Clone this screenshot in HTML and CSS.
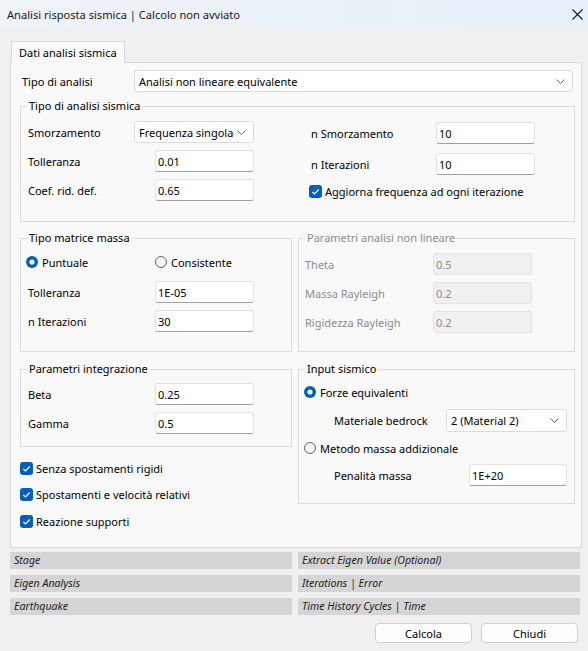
FILE: index.html
```html
<!DOCTYPE html>
<html>
  <head>
    <meta charset="utf-8" />
    <title>Analisi risposta sismica</title>
    <link rel="stylesheet" href="styles.css">
  </head>
  <body>
    <div class="titlebar">
      <span class="title">Analisi risposta sismica | Calcolo non avviato</span>
      <svg class="close" width="11" height="11" viewBox="0 0 11 11"><path d="M0.5 0.5L10.5 10.5M10.5 0.5L0.5 10.5" stroke="#1a1a1a" stroke-width="1.1" fill="none"/></svg>
    </div>

    <div class="dialog">
      <div class="tabs">
        <div class="tab">Dati analisi sismica</div>
      </div>

      <div class="panel">
        <div class="analysis-row">
          <label class="analysis-label">Tipo di analisi</label>
          <div class="select select-wide">
            <span>Analisi non lineare equivalente</span>
            <svg width="9" height="5" viewBox="0 0 9 5"><path d="M0.5 0.5L4.5 4.5L8.5 0.5" stroke="#606060" fill="none"/></svg>
          </div>
        </div>

        <fieldset class="group group-top">
          <legend>Tipo di analisi sismica</legend>
          <div class="group-body body-seismic">
            <div class="col">
              <div class="row">
                <label>Smorzamento</label>
                <div class="select select-damping">
                  <span>Frequenza singola</span>
                  <svg width="9" height="5" viewBox="0 0 9 5"><path d="M0.5 0.5L4.5 4.5L8.5 0.5" stroke="#606060" fill="none"/></svg>
                </div>
              </div>
              <div class="row">
                <label>Tolleranza</label>
                <input class="field" type="text" value="0.01">
              </div>
              <div class="row">
                <label>Coef. rid. def.</label>
                <input class="field" type="text" value="0.65">
              </div>
            </div>
            <div class="col col-right">
              <div class="row">
                <label>n Smorzamento</label>
                <input class="field" type="text" value="10">
              </div>
              <div class="row row-loose">
                <label>n Iterazioni</label>
                <input class="field" type="text" value="10">
              </div>
              <div class="check check-update">
                <svg width="13" height="13" viewBox="0 0 13 13"><rect width="13" height="13" rx="3" fill="#005fb8"/><path d="M3.3 6.8L5.5 9L9.8 4.5" stroke="#fff" stroke-width="1.2" fill="none"/></svg>
                <span>Aggiorna frequenza ad ogni iterazione</span>
              </div>
            </div>
          </div>
        </fieldset>

        <div class="pair">
          <fieldset class="group">
            <legend>Tipo matrice massa</legend>
            <div class="group-body body-mass">
              <div class="radio-row">
                <div class="radio radio-first">
                  <svg width="12" height="12" viewBox="0 0 12 12"><circle cx="6" cy="6" r="6" fill="#005fb8"/><circle cx="6" cy="6" r="2.6" fill="#fff"/></svg>
                  <span>Puntuale</span>
                </div>
                <div class="radio">
                  <svg width="12" height="12" viewBox="0 0 12 12"><circle cx="6" cy="6" r="5.5" fill="#f5f5f5" stroke="#646464"/></svg>
                  <span>Consistente</span>
                </div>
              </div>
              <div class="row row-inset row-spaced">
                <label>Tolleranza</label>
                <input class="field" type="text" value="1E-05">
              </div>
              <div class="row row-inset">
                <label>n Iterazioni</label>
                <input class="field" type="text" value="30">
              </div>
            </div>
          </fieldset>

          <fieldset class="group disabled">
            <legend>Parametri analisi non lineare</legend>
            <div class="group-body body-nonlinear">
              <div class="row">
                <label>Theta</label>
                <input class="field" type="text" value="0.5" disabled>
              </div>
              <div class="row">
                <label>Massa Rayleigh</label>
                <input class="field" type="text" value="0.2" disabled>
              </div>
              <div class="row">
                <label>Rigidezza Rayleigh</label>
                <input class="field" type="text" value="0.2" disabled>
              </div>
            </div>
          </fieldset>
        </div>

        <div class="pair pair-lower">
          <div class="stack">
            <fieldset class="group">
              <legend>Parametri integrazione</legend>
              <div class="group-body body-integration">
                <div class="row row-inset">
                  <label>Beta</label>
                  <input class="field" type="text" value="0.25">
                </div>
                <div class="row row-inset">
                  <label>Gamma</label>
                  <input class="field" type="text" value="0.5">
                </div>
              </div>
            </fieldset>

            <div class="checks">
              <div class="check">
                <svg width="13" height="13" viewBox="0 0 13 13"><rect width="13" height="13" rx="3" fill="#005fb8"/><path d="M3.3 6.8L5.5 9L9.8 4.5" stroke="#fff" stroke-width="1.2" fill="none"/></svg>
                <span>Senza spostamenti rigidi</span>
              </div>
              <div class="check">
                <svg width="13" height="13" viewBox="0 0 13 13"><rect width="13" height="13" rx="3" fill="#005fb8"/><path d="M3.3 6.8L5.5 9L9.8 4.5" stroke="#fff" stroke-width="1.2" fill="none"/></svg>
                <span>Spostamenti e velocità relativi</span>
              </div>
              <div class="check">
                <svg width="13" height="13" viewBox="0 0 13 13"><rect width="13" height="13" rx="3" fill="#005fb8"/><path d="M3.3 6.8L5.5 9L9.8 4.5" stroke="#fff" stroke-width="1.2" fill="none"/></svg>
                <span>Reazione supporti</span>
              </div>
            </div>
          </div>

          <fieldset class="group group-input">
            <legend>Input sismico</legend>
            <div class="group-body body-input">
              <div class="radio">
                <svg width="12" height="12" viewBox="0 0 12 12"><circle cx="6" cy="6" r="6" fill="#005fb8"/><circle cx="6" cy="6" r="2.6" fill="#fff"/></svg>
                <span>Forze equivalenti</span>
              </div>
              <div class="row row-sub row-bedrock">
                <label>Materiale bedrock</label>
                <div class="select select-bedrock">
                  <span>2 (Material 2)</span>
                  <svg width="9" height="5" viewBox="0 0 9 5"><path d="M0.5 0.5L4.5 4.5L8.5 0.5" stroke="#606060" fill="none"/></svg>
                </div>
              </div>
              <div class="radio radio-mass">
                <svg width="12" height="12" viewBox="0 0 12 12"><circle cx="6" cy="6" r="5.5" fill="#f5f5f5" stroke="#646464"/></svg>
                <span>Metodo massa addizionale</span>
              </div>
              <div class="row row-sub row-penalty">
                <label>Penalità massa</label>
                <input class="field field-penalty" type="text" value="1E+20">
              </div>
            </div>
          </fieldset>
        </div>
      </div>

      <div class="status">
        <div class="bar">Stage</div>
        <div class="bar">Extract Eigen Value (Optional)</div>
        <div class="bar">Eigen Analysis</div>
        <div class="bar">Iterations | Error</div>
        <div class="bar">Earthquake</div>
        <div class="bar">Time History Cycles | Time</div>
      </div>

      <div class="actions">
        <button class="button">Calcola</button>
        <button class="button">Chiudi</button>
      </div>
    </div>
  </body>
</html>
```

FILE: styles.css
```css
body {
  margin: 0;
  width: 588px;
  height: 651px;
  overflow: hidden;
  background: #f0f0f0;
  font-family: "Noto Sans", "Open Sans", sans-serif;
  font-size: 11px;
  color: #000;
}

.titlebar {
  height: 28px;
  display: flex;
  align-items: center;
  justify-content: space-between;
  padding: 0 5px 0 7px;
  background: linear-gradient(90deg, #eef3f7, #e6f0f9);
  font-size: 11.1px;
  color: #1a1a1a;
}

.dialog {
  padding: 13px 6px 0 10px;
}

/* tab strip */
.tabs {
  display: flex;
  margin-bottom: -1px;
  position: relative;
  z-index: 1;
}

.tab {
  margin-left: 1px;
  height: 21px;
  line-height: 21px;
  padding: 0 7px;
  border: 1px solid #d9d9d9;
  border-bottom: none;
  background: #f9f9f9;
}

.panel {
  border: 1px solid #d9d9d9;
  background: #f9f9f9;
  padding: 7px 6px 18px 9px;
}

.analysis-row {
  display: flex;
  align-items: center;
  height: 22px;
}

.analysis-label {
  width: 114px;
  padding-left: 2px;
  box-sizing: border-box;
}

/* combo boxes */
.select {
  display: flex;
  align-items: center;
  justify-content: space-between;
  height: 22px;
  box-sizing: border-box;
  padding: 0 7px 0 4px;
  background: #fff;
  border: 1px solid #dcdcdc;
  border-radius: 3px;
  white-space: nowrap;
}

.select-wide {
  width: 439px;
}

.select-damping {
  width: 120px;
}

.select-bedrock {
  width: 121px;
  height: 23px;
}

/* text boxes */
.field {
  width: 99px;
  height: 22px;
  box-sizing: border-box;
  margin: 0;
  padding: 0 2px;
  border: 1px solid #e2e2e2;
  border-bottom-color: #a0a0a0;
  border-radius: 3px;
  background: #fff;
  font: inherit;
  color: #000;
}

.field:disabled {
  background: #f0f0f0;
  border-color: #e4e4e4;
  color: #8c8c8c;
}

.field-penalty {
  width: 98px;
}

/* group boxes */
.group {
  margin: 0;
  padding: 0;
  min-width: 0;
  border: 1px solid #dcdcdc;
}

.group-top {
  margin-top: 6px;
}

.group legend {
  margin-left: 6px;
  padding: 0 2px;
  line-height: 16px;
}

.group.disabled {
  color: #8c8c8c;
}

.body-seismic {
  display: grid;
  grid-template-columns: 226px 224px;
  column-gap: 57px;
  padding: 7px 0 20px 7px;
}

.body-mass {
  padding: 8px 0 19px 5px;
}

.body-nonlinear {
  padding: 7px 0 18px 6px;
  width: 227px;
}

.body-integration {
  padding: 6px 0 12px 5px;
}

.body-input {
  padding: 7px 0 17px 5px;
}

.col {
  display: flex;
  flex-direction: column;
  gap: 7px;
}

.col-right {
  gap: 0;
  padding-top: 1px;
}

.row {
  display: flex;
  align-items: center;
  justify-content: space-between;
  height: 22px;
}

.body-mass .row + .row,
.body-nonlinear .row + .row,
.body-integration .row + .row {
  margin-top: 7px;
}

.row-loose {
  margin-top: 9px;
}

.row-inset {
  width: 226px;
  margin-left: 2px;
}

.row-spaced {
  margin-top: 11px;
}

.row-sub {
  margin: 0 7px 0 30px;
}

.row-bedrock {
  height: 23px;
  margin-top: 9px;
}

.row-penalty {
  margin-top: 8px;
}

/* check boxes and radio buttons */
.check {
  display: flex;
  align-items: center;
  gap: 3px;
  height: 16px;
}

.check-update {
  margin: 8px 0 0 -2px;
}

.radio-row {
  display: flex;
  height: 16px;
}

.radio {
  display: flex;
  align-items: center;
  gap: 4px;
  height: 16px;
}

.radio-first {
  width: 129px;
}

.radio-mass {
  margin-top: 8px;
}

.pair {
  display: grid;
  grid-template-columns: 272px 1fr;
  column-gap: 6px;
  margin-top: 8px;
}

.pair-lower {
  align-items: start;
  margin-top: 9px;
}

.checks {
  display: flex;
  flex-direction: column;
  gap: 10.5px;
  margin-top: 13px;
}

/* progress strip */
.status {
  display: grid;
  grid-template-columns: 282px 282px;
  gap: 6px;
  margin-top: 4px;
}

.bar {
  height: 17px;
  line-height: 17px;
  padding-left: 4px;
  background: #d5d5d5;
  font-style: italic;
  font-size: 10.6px;
  color: #1e1e1e;
}

.actions {
  display: flex;
  justify-content: flex-end;
  gap: 9px;
  margin: 8px 4px 0 0;
}

.button {
  width: 97px;
  height: 20px;
  padding: 0;
  border: 1px solid #d0d0d0;
  border-radius: 4px;
  background: #fdfdfd;
  font: inherit;
  color: #000;
}
```
